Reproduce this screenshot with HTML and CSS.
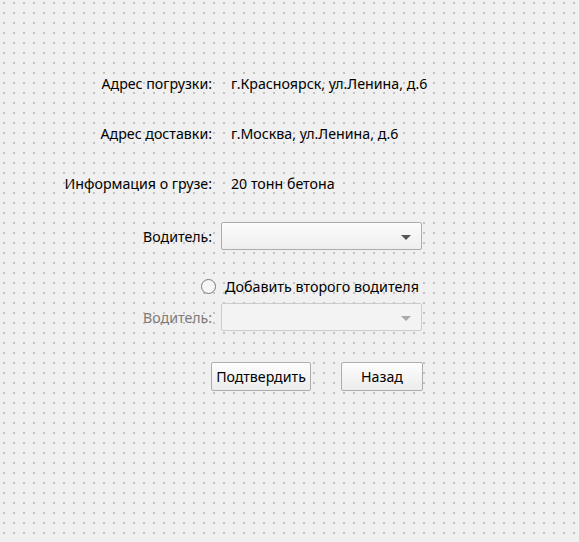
FILE: index.html
```html
<!DOCTYPE html>
<html lang="ru">
<head>
<meta charset="utf-8">
<title>Заказ</title>
<link rel="stylesheet" href="styles.css">
</head>
<body>
<div class="form">
  <div class="row r1">
    <span class="label">Адрес погрузки:</span>
    <span class="value">г.Красноярск, ул.Ленина, д.6</span>
  </div>
  <div class="row r2">
    <span class="label">Адрес доставки:</span>
    <span class="value">г.Москва, ул.Ленина, д.6</span>
  </div>
  <div class="row r3">
    <span class="label">Информация о грузе:</span>
    <span class="value">20 тонн бетона</span>
  </div>
  <div class="row r4">
    <span class="label">Водитель:</span>
    <div class="combo"><span class="arrow"></span></div>
  </div>
  <div class="row r5">
    <span class="radio"></span>
    <span class="radio-text">Добавить второго водителя</span>
  </div>
  <div class="row r6 disabled">
    <span class="label">Водитель:</span>
    <div class="combo"><span class="arrow"></span></div>
  </div>
  <div class="row r7">
    <button class="btn btn-confirm">Подтвердить</button>
    <button class="btn btn-back">Назад</button>
  </div>
</div>
</body>
</html>
```

FILE: styles.css
```css
html, body {
  margin: 0;
  padding: 0;
  height: 100%;
}
body {
  background-color: #f0f0f0;
  background-image: radial-gradient(circle, #c2c2c2 0.7px, rgba(240,240,240,0) 1.3px);
  background-size: 10px 10px;
  background-position: -1px -2px;
  font-family: "Noto Sans", "Open Sans", sans-serif;
  font-size: 14.2px;
  color: #000;
}
.form {
  padding-top: 69px;
}
.row {
  display: flex;
  align-items: center;
  height: 28px;
}
.r2, .r3 { margin-top: 22px; }
.r4 { margin-top: 25px; }
.r5 { margin-top: 22px; }
.r6 { margin-top: 3px; height: 28px; }
.r7 { margin-top: 31px; height: 29px; }
.label {
  width: 212px;
  text-align: right;
}
.value {
  margin-left: 19px;
}
.combo {
  position: relative;
  margin-left: 9px;
  width: 199px;
  height: 26px;
  border: 1px solid #acacac;
  border-radius: 2px;
  background: linear-gradient(#fcfcfc, #eeeeee);
}
.arrow {
  position: absolute;
  right: 10px;
  top: 12px;
  width: 0;
  height: 0;
  border-left: 5px solid transparent;
  border-right: 5px solid transparent;
  border-top: 5px solid #555;
}
.disabled .label { color: #7a7a7a; }
.disabled .combo {
  border-color: #cccccc;
  background: #f3f3f3;
}
.disabled .arrow { border-top-color: #aaaaaa; }
.radio {
  margin-left: 201px;
  width: 13px;
  height: 13px;
  border: 1px solid #7a7a7a;
  border-radius: 50%;
  background: #f6f6f6;
}
.radio-text {
  margin-left: 9px;
  font-size: 14.3px;
}
.btn {
  height: 29px;
  border: 1px solid #adadad;
  border-radius: 2px;
  background: linear-gradient(#fdfdfd, #ececec);
  font-family: "Noto Sans", "Open Sans", sans-serif;
  font-size: 14.2px;
  color: #000;
  padding: 0;
}
.btn-confirm {
  margin-left: 211px;
  width: 100px;
}
.btn-back {
  margin-left: 30px;
  width: 82px;
}
```
